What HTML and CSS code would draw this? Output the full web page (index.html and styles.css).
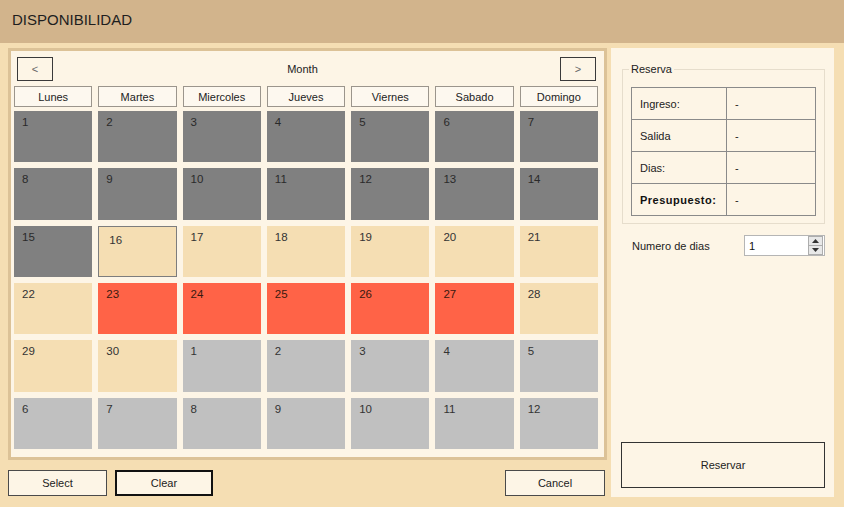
FILE: index.html
```html
<!DOCTYPE html>
<html lang="es">
<head>
<meta charset="utf-8">
<title>Disponibilidad</title>
<link rel="stylesheet" href="styles.css">
</head>
<body>
<div class="titlebar">DISPONIBILIDAD</div>
<div class="main">
  <div class="left">
    <div class="calendar">
      <div class="nav">
        <button class="navbtn">&lt;</button>
        <span class="month">Month</span>
        <button class="navbtn">&gt;</button>
      </div>
      <div class="days">
        <div class="dayname">Lunes</div>
        <div class="dayname">Martes</div>
        <div class="dayname">Miercoles</div>
        <div class="dayname">Jueves</div>
        <div class="dayname">Viernes</div>
        <div class="dayname">Sabado</div>
        <div class="dayname">Domingo</div>
      </div>
      <div class="grid">
        <div class="cell past">1</div>
        <div class="cell past">2</div>
        <div class="cell past">3</div>
        <div class="cell past">4</div>
        <div class="cell past">5</div>
        <div class="cell past">6</div>
        <div class="cell past">7</div>
        <div class="cell past">8</div>
        <div class="cell past">9</div>
        <div class="cell past">10</div>
        <div class="cell past">11</div>
        <div class="cell past">12</div>
        <div class="cell past">13</div>
        <div class="cell past">14</div>
        <div class="cell past">15</div>
        <div class="cell free today">16</div>
        <div class="cell free">17</div>
        <div class="cell free">18</div>
        <div class="cell free">19</div>
        <div class="cell free">20</div>
        <div class="cell free">21</div>
        <div class="cell free">22</div>
        <div class="cell busy">23</div>
        <div class="cell busy">24</div>
        <div class="cell busy">25</div>
        <div class="cell busy">26</div>
        <div class="cell busy">27</div>
        <div class="cell free">28</div>
        <div class="cell free">29</div>
        <div class="cell free">30</div>
        <div class="cell other">1</div>
        <div class="cell other">2</div>
        <div class="cell other">3</div>
        <div class="cell other">4</div>
        <div class="cell other">5</div>
        <div class="cell other">6</div>
        <div class="cell other">7</div>
        <div class="cell other">8</div>
        <div class="cell other">9</div>
        <div class="cell other">10</div>
        <div class="cell other">11</div>
        <div class="cell other">12</div>
      </div>
    </div>
    <div class="actions">
      <button class="btn">Select</button>
      <button class="btn btn-strong">Clear</button>
      <button class="btn btn-cancel">Cancel</button>
    </div>
  </div>
  <div class="side">
    <div class="group">
      <span class="group-label">Reserva</span>
      <table class="summary">
        <tr><td class="k">Ingreso:</td><td class="v">-</td></tr>
        <tr><td class="k">Salida</td><td class="v">-</td></tr>
        <tr><td class="k">Dias:</td><td class="v">-</td></tr>
        <tr><td class="k strong">Presupuesto:</td><td class="v">-</td></tr>
      </table>
    </div>
    <div class="days-row">
      <span class="days-label">Numero de dias</span>
      <div class="spinner">
        <span class="spin-value">1</span>
        <div class="spin-btns">
          <span class="spin-btn"><svg width="7" height="4" viewBox="0 0 7 4"><path d="M0 4 L3.5 0 L7 4 Z" fill="#333"/></svg></span>
          <span class="spin-btn"><svg width="7" height="4" viewBox="0 0 7 4"><path d="M0 0 L3.5 4 L7 0 Z" fill="#333"/></svg></span>
        </div>
      </div>
    </div>
    <button class="reservar">Reservar</button>
  </div>
</div>
</body>
</html>
```
FILE: styles.css
```css
* { box-sizing: border-box; }

html, body {
  margin: 0;
  padding: 0;
}

body {
  width: 844px;
  height: 507px;
  overflow: hidden;
  background: #f5deb3;
  font-family: "Liberation Sans", Arial, sans-serif;
  font-size: 11px;
  color: #222;
}

.titlebar {
  height: 43px;
  background: #d2b48c;
  display: flex;
  align-items: center;
  padding: 0 0 5px 12px;
  font-size: 15px;
  color: #1e1e1e;
}

.main {
  display: flex;
  align-items: flex-start;
  padding: 5px 0 0 8px;
}

.left {
  width: 599px;
  display: flex;
  flex-direction: column;
}

.calendar {
  width: 599px;
  height: 412px;
  border: 3px solid #dcc297;
  background: #fdf5e6;
  padding: 0 6px 0 3px;
  display: flex;
  flex-direction: column;
}

.nav {
  display: flex;
  align-items: center;
  justify-content: space-between;
  padding: 6px 2px 0 3px;
}

.navbtn {
  width: 36px;
  height: 24px;
  border: 1px solid #3a3a3a;
  background: #fdf5e6;
  font-family: "Liberation Sans", Arial, sans-serif;
  font-size: 11px;
  color: #666;
  padding: 0;
}

.month {
  color: #222;
  margin-right: 8px;
}

.days {
  display: grid;
  grid-template-columns: repeat(7, 1fr);
  column-gap: 6px;
  margin-top: 5px;
  height: 21px;
}

.dayname {
  border: 1px solid #9b958c;
  background: #fdf8ef;
  display: flex;
  align-items: center;
  justify-content: center;
  color: #222;
}

.grid {
  display: grid;
  grid-template-columns: repeat(7, 1fr);
  grid-template-rows: repeat(6, 1fr);
  gap: 6px;
  margin-top: 4px;
  height: 338px;
}

.cell {
  padding: 4px 0 0 8px;
  font-size: 11.5px;
  line-height: 14px;
  color: #333;
}

.past { background: #808080; color: #2a2a2a; }
.free { background: #f5deb3; }
.busy { background: #ff6347; color: #3a1a10; }
.other { background: #c0c0c0; }

.today {
  border: 1px solid #7d7d7d;
  padding: 6px 0 0 10px;
}

.actions {
  display: flex;
  margin-top: 10px;
  padding-right: 2px;
}

.btn {
  height: 26px;
  width: 99px;
  border: 1px solid #4a4a4a;
  background: #fdf5e6;
  font-family: "Liberation Sans", Arial, sans-serif;
  font-size: 11px;
  color: #222;
  padding: 0;
}

.btn-strong {
  margin-left: 8px;
  width: 98px;
  border: 2px solid #111;
}

.btn-cancel {
  margin-left: auto;
  width: 100px;
}

.side {
  width: 223px;
  height: 449px;
  margin-left: 4px;
  background: #fdf5e6;
  display: flex;
  flex-direction: column;
}

.group {
  position: relative;
  margin: 21px 0 0 11px;
  width: 203px;
  height: 155px;
  border: 1px solid #e6ddcc;
  padding: 17px 0 0 8px;
}

.group-label {
  position: absolute;
  top: -8px;
  left: 6px;
  padding: 0 2px;
  background: #fdf5e6;
  line-height: 14px;
  color: #222;
}

.summary {
  border-collapse: collapse;
  width: 185px;
}

.summary td {
  border: 1px solid #8a8a8a;
  height: 32px;
  padding: 0 0 0 8px;
  color: #222;
}

.summary .k { width: 95px; }
.summary .strong { font-weight: bold; color: #111; letter-spacing: 0.5px; }

.days-row {
  display: flex;
  align-items: center;
  margin: 11px 0 0 21px;
  height: 21px;
}

.days-label {
  width: 112px;
}

.spinner {
  width: 81px;
  height: 21px;
  background: #fff;
  border: 1px solid #b5b5b5;
  display: flex;
  align-items: center;
  padding-left: 4px;
  color: #111;
}

.spin-value {
  flex: 1;
}

.spin-btns {
  display: flex;
  flex-direction: column;
  width: 15px;
  height: 19px;
  margin-right: 1px;
}

.spin-btn {
  flex: 1;
  display: flex;
  align-items: center;
  justify-content: center;
  background: #e8e8e8;
  border: 1px solid #adadad;
}

.spin-btn + .spin-btn { border-top: none; }

.reservar {
  margin: auto 0 9px 10px;
  width: 204px;
  height: 46px;
  border: 1px solid #333;
  background: #fdf5e6;
  font-family: "Liberation Sans", Arial, sans-serif;
  font-size: 11px;
  color: #222;
}
```
